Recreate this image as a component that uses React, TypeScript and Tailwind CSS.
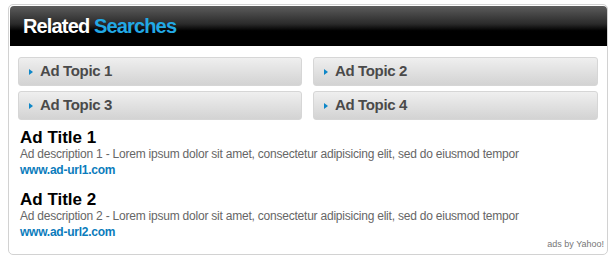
const topics = ['Ad Topic 1', 'Ad Topic 2', 'Ad Topic 3', 'Ad Topic 4'];

const ads = [
  {
    title: 'Ad Title 1',
    description:
      'Ad description 1 - Lorem ipsum dolor sit amet, consectetur adipisicing elit, sed do eiusmod tempor',
    url: 'www.ad-url1.com',
  },
  {
    title: 'Ad Title 2',
    description:
      'Ad description 2 - Lorem ipsum dolor sit amet, consectetur adipisicing elit, sed do eiusmod tempor',
    url: 'www.ad-url2.com',
  },
];

function TopicButton({ label }: { label: string }) {
  return (
    <a
      href="#"
      className="flex h-[29px] items-center rounded-[3px] border border-[#d6d6d6] bg-gradient-to-b from-[#efefef] to-[#d3d3d3] pl-[10px] text-[15px] font-bold tracking-[-0.35px] text-[#4a4a4a]"
    >
      <span className="mr-[7px] h-0 w-0 border-y-[3px] border-l-[4px] border-y-transparent border-l-[#0e87c8]" />
      {label}
    </a>
  );
}

export default function App() {
  return (
    <div className="pl-[8px] pt-[4px] font-['Liberation_Sans',Arial,sans-serif]">
      <div className="flex h-[251px] w-[600px] flex-col rounded-[5px] border border-[#d2d2d2] bg-white">
        <div className="ml-[1px] mt-[1px] flex h-[40px] items-center rounded-t-[4px] bg-[linear-gradient(to_bottom,#5c5c5c_0%,#2a2a2a_45%,#000_62%,#000_100%)] pl-[13px]">
          <h2 className="text-[20px] font-bold leading-[40px] tracking-[-0.85px] text-white">
            Related <span className="text-[#22a8e4]">Searches</span>
          </h2>
        </div>

        <div className="mt-[11px] grid grid-cols-[284px_285px] gap-x-[11px] gap-y-[5px] px-[9px]">
          {topics.map((t) => (
            <TopicButton key={t} label={t} />
          ))}
        </div>

        <div className="mt-[9px] flex flex-col gap-[14px] px-[11px]">
          {ads.map((ad) => (
            <div key={ad.title}>
              <p className="text-[17px] font-bold leading-[18px] text-black">{ad.title}</p>
              <p className="text-[12px] leading-[14px] tracking-[-0.22px] text-[#666]">{ad.description}</p>
              <a
                href="#"
                className="mt-[2px] block text-[12px] font-bold leading-[14px] tracking-[-0.25px] text-[#0b7cbc]"
              >
                {ad.url}
              </a>
            </div>
          ))}
        </div>

        <p className="mt-auto pb-[5px] pr-[3px] text-right text-[9px] leading-[10px] text-[#777]">ads by Yahoo!</p>
      </div>
    </div>
  );
}
